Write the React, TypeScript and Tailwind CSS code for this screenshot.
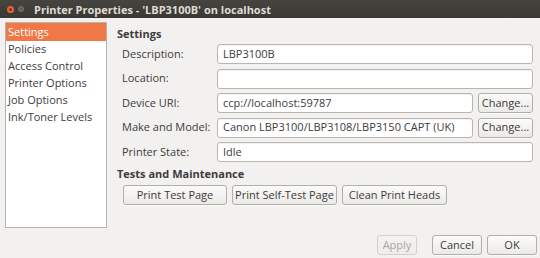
import React from "react";

const font = { fontFamily: '"Open Sans", "DejaVu Sans", sans-serif' };

function Input({ value, className = "" }: { value: string; className?: string }) {
  return (
    <div
      className={
        "h-[20px] flex items-center px-[5px] bg-white border border-[#b9b6b0] rounded-[3px] text-[11px] whitespace-nowrap text-[#3c3c3c] shadow-[inset_0_1px_1px_rgba(0,0,0,0.06)] " +
        className
      }
    >
      {value}
    </div>
  );
}

function Btn({ label, className = "", disabled = false }: { label: string; className?: string; disabled?: boolean }) {
  return (
    <div
      className={
        "h-[20px] flex items-center justify-center rounded-[3px] border text-[11px] whitespace-nowrap bg-gradient-to-b " +
        (disabled
          ? "border-[#d3d1cd] text-[#a7a6a3] from-[#f4f3f2] to-[#eeedeb] "
          : "border-[#b2afa9] text-[#3c3c3c] from-[#fbfbfa] to-[#eceae7] shadow-[0_1px_0_rgba(255,255,255,0.7)] ") +
        className
      }
    >
      {label}
    </div>
  );
}

export default function App() {
  const side = ["Settings", "Policies", "Access Control", "Printer Options", "Job Options", "Ink/Toner Levels"];
  const rows: { label: string; value: string; change?: boolean }[] = [
    { label: "Description:", value: "LBP3100B" },
    { label: "Location:", value: "" },
    { label: "Device URI:", value: "ccp://localhost:59787", change: true },
    { label: "Make and Model:", value: "Canon LBP3100/LBP3108/LBP3150 CAPT (UK)", change: true },
    { label: "Printer State:", value: "Idle" },
  ];
  return (
    <div className="w-[540px] h-[258px] bg-[#f2f1f0] flex flex-col overflow-hidden" style={font}>
      <div className="h-[18px] bg-gradient-to-b from-[#45443f] to-[#393834] flex items-center">
        <div className="ml-[7px] w-[7px] h-[7px] rounded-full bg-[#e9653a] flex items-center justify-center">
          <div className="w-[3px] h-[3px] rounded-full bg-[#7a2e14]" />
        </div>
        <div className="ml-[4px] w-[6px] h-[6px] rounded-full bg-[#5e5c57] border border-[#77756f]" />
        <div className="ml-[10px] text-[11px] font-bold text-[#dfdbd2] leading-none whitespace-nowrap">
          Printer Properties - 'LBP3100B' on localhost
        </div>
      </div>
      <div className="flex flex-1">
        <div className="ml-[5px] mt-[4px] w-[102px] h-[206px] bg-white border border-[#b7b4ae] flex flex-col">
          {side.map((s, i) => (
            <div
              key={s}
              className={
                "flex items-center pl-[2px] text-[11px] whitespace-nowrap " +
                (i === 0 ? "h-[18px] bg-[#f07746] text-white" : "h-[17px] text-[#3c3c3c]")
              }
            >
              {s}
            </div>
          ))}
        </div>
        <div className="flex-1 ml-[10px] mr-[7px] flex flex-col">
          <div className="mt-[8px] h-[17px] flex items-center text-[11px] font-bold text-[#3c3c3c]">Settings</div>
          <div className="mt-[1px] flex flex-col gap-[4.5px]">
            {rows.map((r) => (
              <div key={r.label} className="flex items-center">
                <div className="w-[100px] pl-[5px] text-[11px] whitespace-nowrap text-[#3c3c3c]">{r.label}</div>
                <Input value={r.value} className="flex-1" />
                {r.change && <Btn label="Change..." className="ml-[5px] w-[55px]" />}
              </div>
            ))}
          </div>
          <div className="mt-[2px] h-[20px] flex items-center text-[11px] font-bold text-[#3c3c3c]">Tests and Maintenance</div>
          <div className="mt-[1px] ml-[6px] flex gap-[5px]">
            <Btn label="Print Test Page" className="w-[104px]" />
            <Btn label="Print Self-Test Page" className="w-[105px]" />
            <Btn label="Clean Print Heads" className="w-[105px]" />
          </div>
        </div>
      </div>
      <div className="h-[21px] mb-[2px] flex justify-end pr-[3px]">
        <Btn label="Apply" disabled className="w-[40px] h-[20px]" />
        <Btn label="Cancel" className="ml-[15px] w-[50px] h-[20px]" />
        <Btn label="OK" className="ml-[5px] w-[50px] h-[20px]" />
      </div>
    </div>
  );
}
